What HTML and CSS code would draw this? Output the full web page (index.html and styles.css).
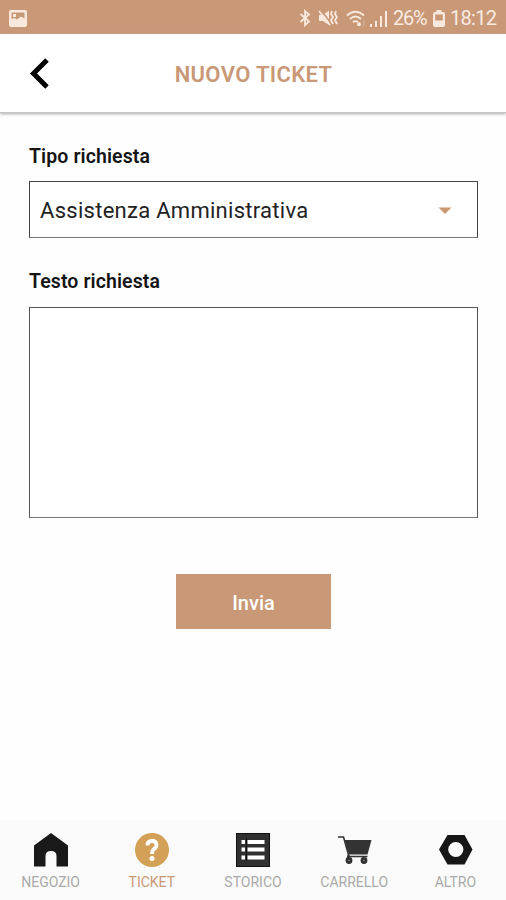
FILE: index.html
```html
<!DOCTYPE html>
<html lang="it">
<head>
<meta charset="utf-8">
<title>Nuovo ticket</title>
<link rel="stylesheet" href="styles.css">
</head>
<body>
<div class="app">
  <div class="status">
    <svg class="status-photo" width="18" height="17" viewBox="0 0 18 17"><path fill-rule="evenodd" d="M2 0H16Q18 0 18 2V15Q18 17 16 17H2Q0 17 0 15V2Q0 0 2 0ZM2.500 2.500V9.500L5 8L8 9.500L12 6.500L15.500 8.500V2.500ZM4 4H7V7H4Z"/></svg>
    <svg class="status-bt" width="12" height="18" viewBox="0 0 12 18"><path d="M1.500 5L10 12.500L6 16V2L10 5.500L1.500 13"/></svg>
    <svg class="status-mute" width="20" height="18" viewBox="0 0 20 18"><path class="fill" d="M1 6H5L11 1.500V16L5 12H1Z"/><path class="slash" d="M3 1L12 13"/><path d="M1 2L12 16"/><path d="M14 2L13 5L15 8L13 11L15 15M18 2L17 5L19 8L17 11L19 15"/></svg>
    <svg class="status-wifi" width="22" height="17" viewBox="0 0 22 17"><path d="M1 5.500Q9.500 -2 18 5.500M4 9Q9.500 4 15 9M7 12.200Q9.500 10 12 12.200"/><circle class="fill" cx="13" cy="14.300" r="2"/><path class="thin" d="M18 10V16"/></svg>
    <svg class="status-signal" width="18" height="17" viewBox="0 0 18 17"><path class="fill" d="M0 14H2V17H0ZM5 11H7V17H5ZM10 6H12V17H10ZM15 1H17V17H15Z"/></svg>
    <span class="status-charge">26%</span>
    <svg class="status-battery" width="12" height="17" viewBox="0 0 12 17"><path fill-rule="evenodd" d="M3.500 0H8.500V2H10Q12 2 12 4V15Q12 17 10 17H2Q0 17 0 15V4Q0 2 2 2H3.500ZM2.200 4.500V10.500H9.800V4.500Z"/></svg>
    <span class="status-time">18:12</span>
  </div>
  <header class="header">
    <svg class="back" width="22" height="32" viewBox="0 0 22 32"><path d="M18 2L4.500 15.500L18 29"/></svg>
    <h1 class="title">NUOVO TICKET</h1>
  </header>
  <main class="form">
    <div class="label">Tipo richiesta</div>
    <div class="select">
      <span class="select-value">Assistenza Amministrativa</span>
      <svg width="14" height="8" viewBox="0 0 14 8"><path d="M.5 .5H13.500L7 7Z"/></svg>
    </div>
    <div class="label">Testo richiesta</div>
    <div class="textarea"></div>
    <button class="submit">Invia</button>
  </main>
  <nav class="tabs">
    <div class="tab">
      <svg width="36" height="36" viewBox="0 0 36 36"><path fill="#191919" d="M18 1L35 13.500V34.500H23.500V24Q23.500 19 18 19Q12.500 19 12.500 24V34.500H1V13.500Z"/></svg>
      <span class="tab-name">NEGOZIO</span>
    </div>
    <div class="tab active">
      <svg width="36" height="36" viewBox="0 0 36 36"><circle cx="18" cy="18" r="17" fill="#d2a057"/><path d="M13.500 13.500Q13.500 9 18 9Q22.500 9 22.500 13Q22.500 15.500 20 17Q18 18.500 18 22" fill="none" stroke="#fff" stroke-width="3.800"/><circle cx="18" cy="26.400" r="2.500" fill="#fff"/></svg>
      <span class="tab-name">TICKET</span>
    </div>
    <div class="tab">
      <svg width="36" height="36" viewBox="0 0 36 36"><path fill="#303030" d="M1 1H35V35H1Z"/><path fill="none" stroke="#111" stroke-width="1" d="M1.500 1.500H34.500V34.500H1.500ZM11.500 6V29"/><path fill="#fff" d="M6.500 8H10V12H6.500ZM12.500 8H29.500V12H12.500ZM6.500 15.500H10V19.500H6.500ZM12.500 15.500H29.500V19.500H12.500ZM6.500 23.500H10V27.500H6.500ZM12.500 23.500H29.500V27.500H12.500Z"/></svg>
      <span class="tab-name">STORICO</span>
    </div>
    <div class="tab">
      <svg width="36" height="36" viewBox="0 0 36 36"><path d="M2 5H7.500L13 24.500H31.500" fill="none" stroke="#333" stroke-width="1.600"/><path fill="#333" d="M8.500 8H35.500L31.500 22.500H13Z"/><path d="M12.500 23L11.500 27" fill="none" stroke="#333" stroke-width="2"/><circle cx="13" cy="28.500" r="3.400" fill="#303030"/><circle cx="28" cy="28.500" r="3.400" fill="#303030"/><circle cx="13" cy="28.500" r=".8" fill="#999"/><circle cx="28" cy="28.500" r=".8" fill="#999"/></svg>
      <span class="tab-name">CARRELLO</span>
    </div>
    <div class="tab">
      <svg width="36" height="36" viewBox="0 0 36 36"><path fill="#161616" fill-rule="evenodd" d="M10.500 3H27.500L35.500 17.500L27.500 32.500H10.500L2 17.500ZM18.800 9.900A7.600 7.600 0 1 0 18.800 25.100A7.600 7.600 0 1 0 18.800 9.900Z"/></svg>
      <span class="tab-name">ALTRO</span>
    </div>
  </nav>
</div>
</body>
</html>
```

FILE: styles.css
```css
* { box-sizing: border-box; }
body { margin: 0; background: #fefefe; font-family: Roboto, "Liberation Sans", sans-serif; }
.app { width: 506px; height: 900px; display: flex; flex-direction: column; overflow: hidden; }
svg { display: block; flex: none; }

.status { height: 34px; flex: none; display: flex; align-items: center; padding: 2px 10px 0 9px; background: #c99877; color: #f8ebe2; font-size: 20px; line-height: 32px; white-space: nowrap; }
.status svg { fill: none; stroke: #f8e8dd; stroke-width: 1.8; }
.status .fill { fill: #f8e8dd; stroke: none; }
.status .slash { stroke: #c99877; stroke-width: 1.5; }
.status .thin { stroke-width: 1; opacity: .4; }
.status .status-photo, .status .status-battery { fill: #f8e8dd; stroke: none; }
.status-photo { margin-right: auto; }
.status-bt { margin-right: 7px; }
.status-mute { margin-right: 8px; }
.status-wifi { margin-right: 2px; }
.status-signal { margin-right: 5px; }
.status-charge { width: 34px; margin-right: 6px; letter-spacing: -1.2px; }
.status-battery { margin-right: 5px; }
.status-time { width: 46px; letter-spacing: -.7px; }

.header { height: 79px; flex: none; display: grid; grid-template-columns: 100px 1fr 99px; align-items: center; border-bottom: 1px solid #c4c7c7; box-shadow: 0 1px 3px #aaa; background: #fff; }
.back { margin: 2px 0 0 29px; fill: none; stroke: #000; stroke-width: 5; }
.title { margin: 3px 0 0; color: #c99877; font-size: 22px; font-weight: 600; letter-spacing: .35px; line-height: 30px; text-align: center; white-space: nowrap; }

.form { flex: 1; display: flex; flex-direction: column; padding: 31px 28px 0 29px; }
.label { font-size: 19.500px; font-weight: 600; letter-spacing: .1px; line-height: 25px; color: #141414; white-space: nowrap; }
.select { height: 57px; margin: 12px 0 31px; padding: 2px 25px 0 10px; display: flex; align-items: center; justify-content: space-between; border: 1px solid #444; border-bottom-color: #777; background: #fff; }
.select-value { font-size: 22px; color: #222; letter-spacing: .28px; white-space: nowrap; }
.select svg { fill: #cb9870; }
.textarea { height: 211px; margin-top: 13px; border: 1px solid #555; border-bottom-color: #777; background: #fff; }
.submit { width: 155px; height: 55px; margin: 56px auto 0; padding: 2px 0 0; border: 0; background: #c99877; color: #fff; font: 500 20px Roboto, sans-serif; }

.tabs { height: 80px; flex: none; display: grid; grid-template-columns: repeat(5, 1fr); background: #fafafa; }
.tab { display: flex; flex-direction: column; align-items: center; padding-top: 12px; color: #aaa; }
.tab-name { margin-top: 5px; font-size: 14px; line-height: 18px; white-space: nowrap; }
.active { color: #c99877; }
```
